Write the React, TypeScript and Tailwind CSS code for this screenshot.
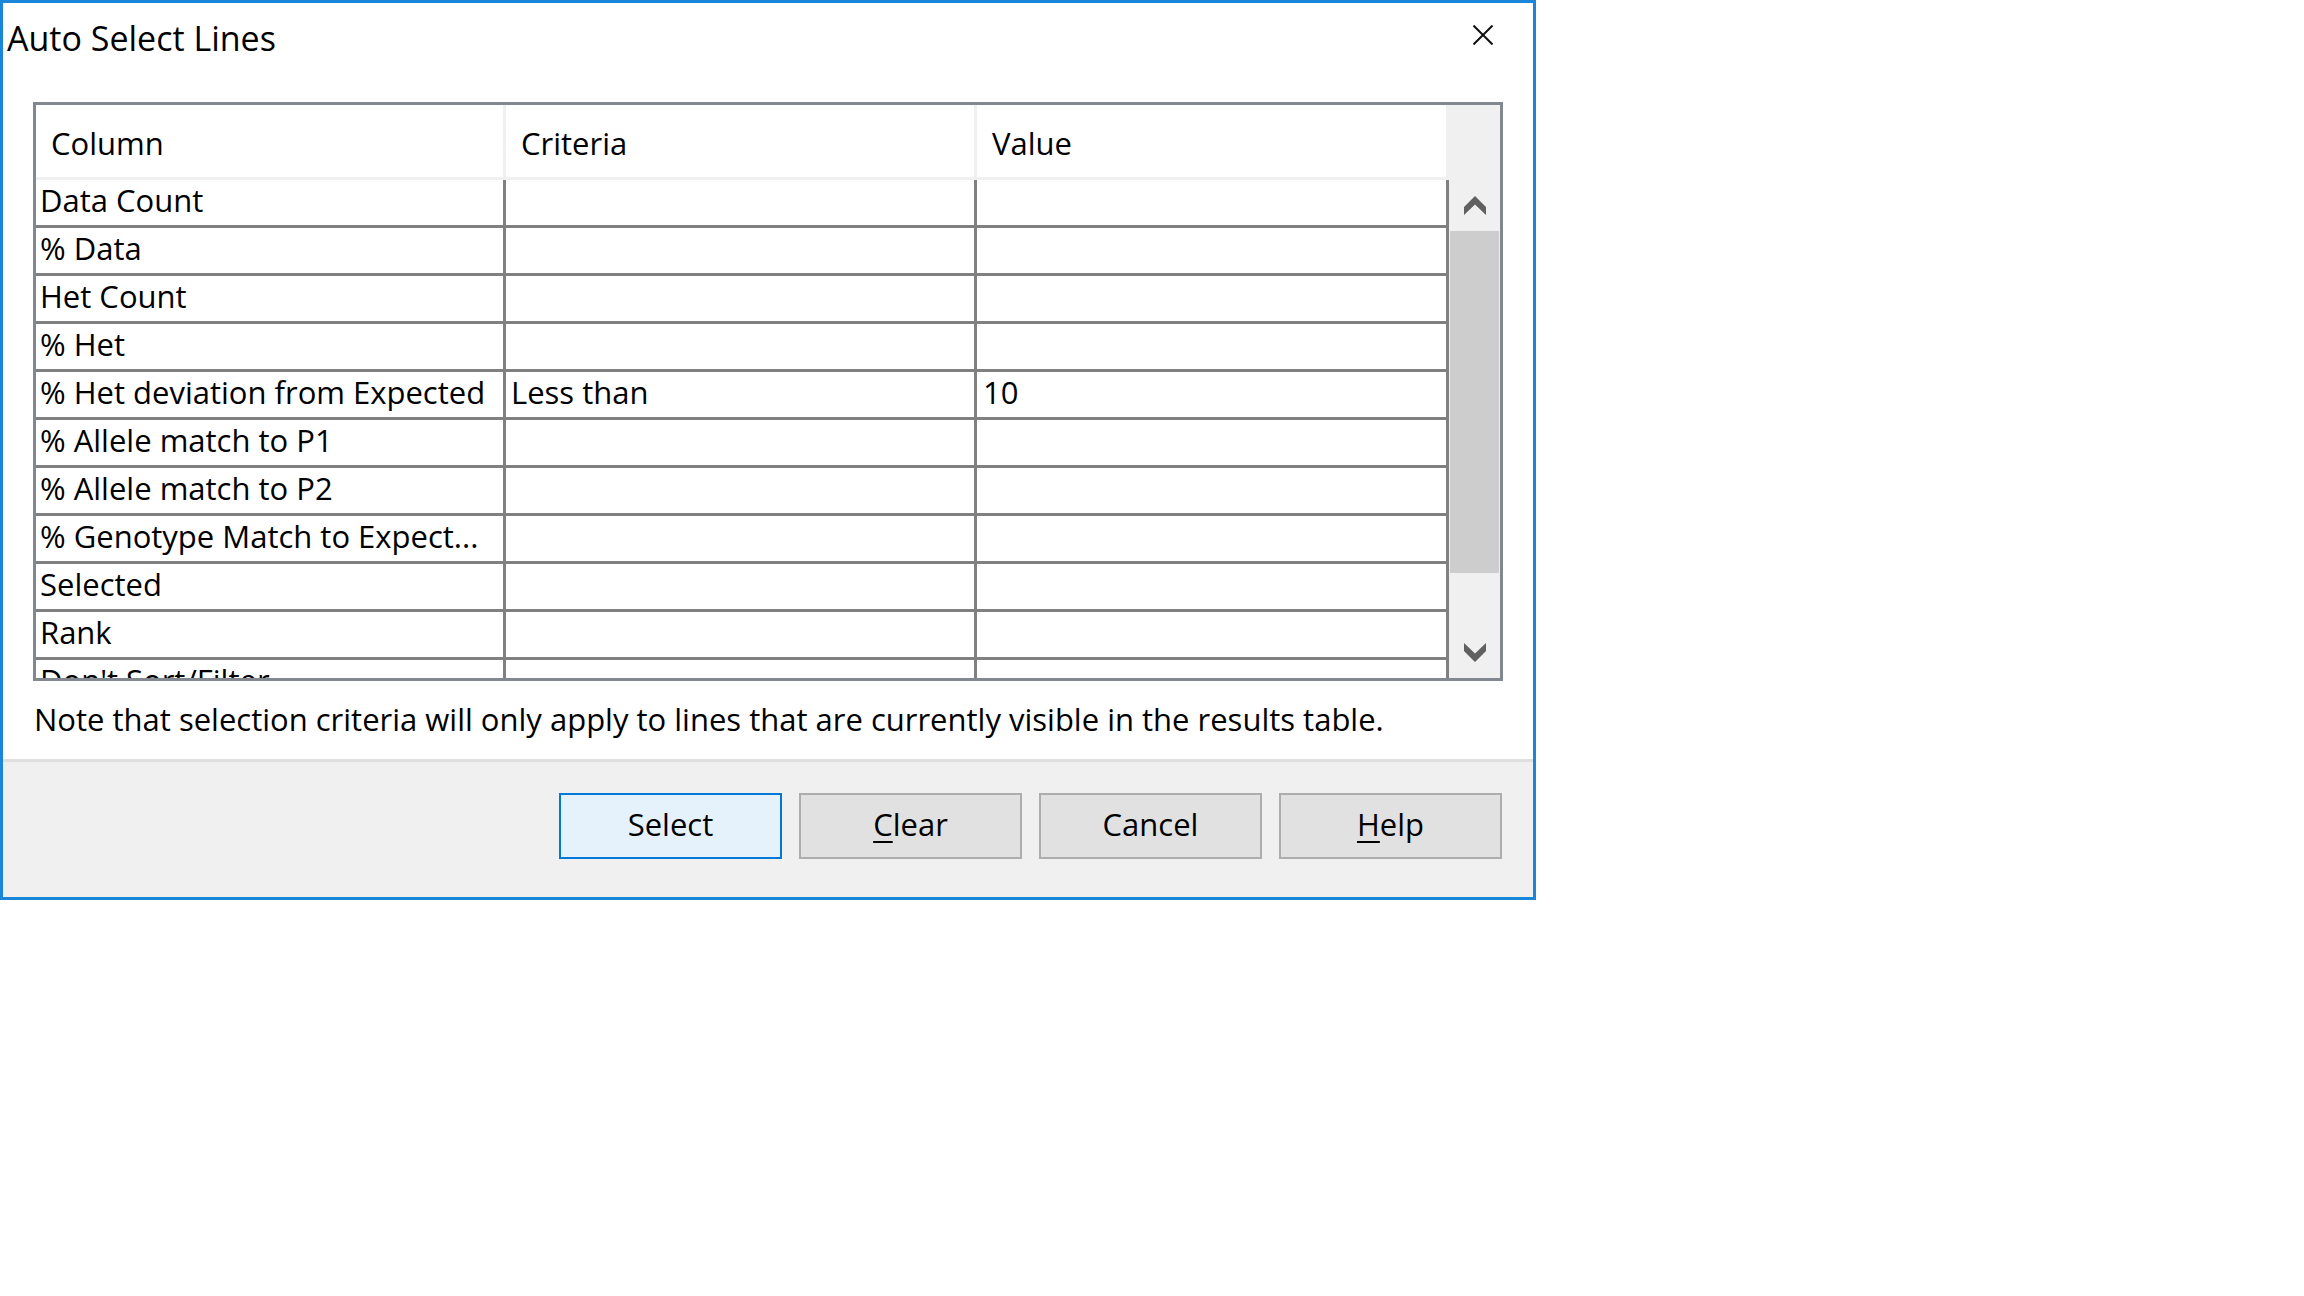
import React from "react";

const NOTE =
  "Note that selection criteria will only apply to lines that are currently visible in the results table.";

const ROWS: [string, string, string][] = [
  ["Data Count", "", ""],
  ["% Data", "", ""],
  ["Het Count", "", ""],
  ["% Het", "", ""],
  ["% Het deviation from Expected", "Less than", "10"],
  ["% Allele match to P1", "", ""],
  ["% Allele match to P2", "", ""],
  ["% Genotype Match to Expect...", "", ""],
  ["Selected", "", ""],
  ["Rank", "", ""],
  ["Don't Sort/Filter", "", ""],
];

function Chevron({ down }: { down?: boolean }) {
  return (
    <svg width="22" height="19" viewBox="0 0 22 19" className={down ? "rotate-180" : ""}>
      <polygon points="11,0 22,11 22,19 11,8.5 0,19 0,11" fill="#606060" />
    </svg>
  );
}

function Button({ children, primary }: { children: React.ReactNode; primary?: boolean }) {
  return (
    <div
      className={
        "w-[223px] h-[66px] flex items-center justify-center border-2 text-[31px] pb-[3px] text-black " +
        (primary ? "border-[#0078d7] bg-[#e5f1fb]" : "border-[#adadad] bg-[#e1e1e1]")
      }
    >
      {children}
    </div>
  );
}

export default function App() {
  return (
    <div className="min-h-[1296px] w-[2304px] bg-white font-['Open_Sans',sans-serif] text-black">
      <div className="w-[1536px] h-[900px] border-[3px] border-[#1a86d9] bg-white flex flex-col">
        {/* Title bar */}
        <div className="h-[99px] flex justify-between items-start">
          <div className="pl-[4px] pt-[10px] text-[34px] leading-normal">Auto Select Lines</div>
          <svg width="20" height="20" viewBox="0 0 20 20" className="mt-[22px] mr-[40px]">
            <line x1="0.5" y1="0.5" x2="19.5" y2="19.5" stroke="#111" strokeWidth="2" />
            <line x1="19.5" y1="0.5" x2="0.5" y2="19.5" stroke="#111" strokeWidth="2" />
          </svg>
        </div>

        {/* Table */}
        <div className="px-[30px]">
          <div className="h-[579px] border-[3px] border-[#828790] flex">
            <div className="w-[1413px] flex flex-col">
              {/* Header */}
              <div className="h-[75px] flex border-b-[3px] border-[#f0f0f0] text-[31px]">
                <div className="w-[470px] border-r-[3px] border-[#f0f0f0] pl-[15px] pt-[4px] flex items-center">Column</div>
                <div className="w-[471px] border-r-[3px] border-[#f0f0f0] pl-[15px] pt-[4px] flex items-center">Criteria</div>
                <div className="w-[472px] border-r-[3px] border-[#f0f0f0] pl-[15px] pt-[4px] flex items-center">Value</div>
              </div>
              {/* Body */}
              <div className="h-[498px] overflow-hidden">
                {ROWS.map(([a, b, c]) => (
                  <div key={a} className="h-[48px] flex border-b-[3px] border-[#808080] text-[31px] leading-[41px]">
                    <div className="w-[470px] border-r-[3px] border-[#808080] pl-[4px] whitespace-nowrap overflow-hidden">{a}</div>
                    <div className="w-[471px] border-r-[3px] border-[#808080] pl-[5px] whitespace-nowrap">{b}</div>
                    <div className="w-[472px] border-r-[3px] border-[#808080] pl-[6px] whitespace-nowrap">{c}</div>
                  </div>
                ))}
              </div>
            </div>
            {/* Scrollbar */}
            <div className="w-[51px] bg-[#f0f0f0] flex flex-col">
              <div className="h-[75px]" />
              <div className="h-[51px] flex items-center justify-center">
                <Chevron />
              </div>
              <div className="h-[342px] px-[1px]">
                <div className="h-full bg-[#cdcdcd]" />
              </div>
              <div className="flex-1" />
              <div className="h-[51px] flex items-center justify-center">
                <Chevron down />
              </div>
            </div>
          </div>
        </div>

        {/* Note */}
        <div className="h-[78px] flex items-center pl-[31px] pb-[2px] text-[31px] whitespace-nowrap">{NOTE}</div>

        {/* Footer */}
        <div className="flex-1 border-t-[3px] border-[#dfdfdf] bg-[#f0f0f0] flex justify-end items-start pt-[31px] pr-[31px] gap-[17px]">
          <Button primary>Select</Button>
          <Button>
            <span>
              <span className="underline underline-offset-[5px] decoration-[2px]">C</span>lear
            </span>
          </Button>
          <Button>Cancel</Button>
          <Button>
            <span>
              <span className="underline underline-offset-[5px] decoration-[2px]">H</span>elp
            </span>
          </Button>
        </div>
      </div>
    </div>
  );
}
